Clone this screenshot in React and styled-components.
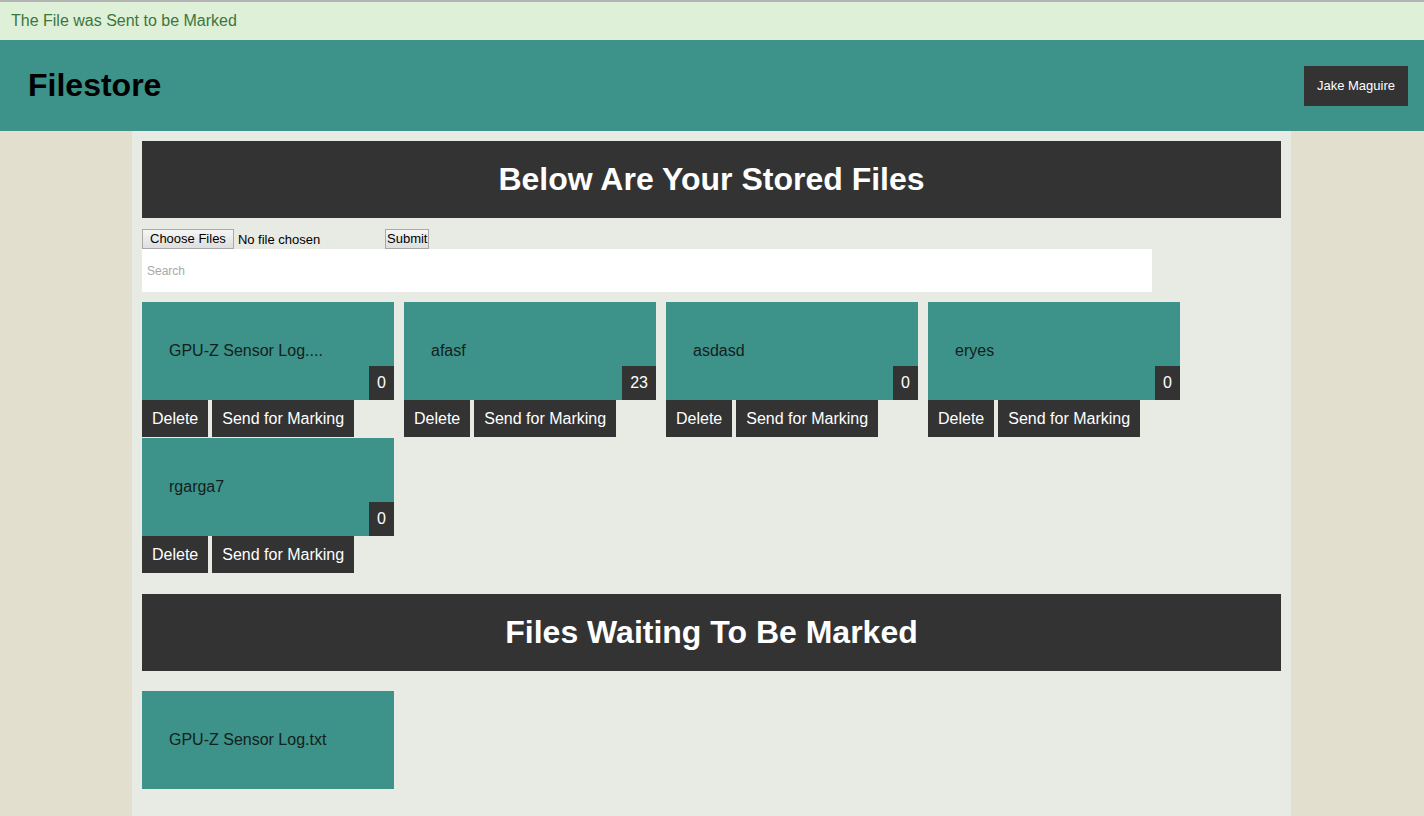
import React from "react";
import styled, { createGlobalStyle } from "styled-components";

const Global = createGlobalStyle`
  html, body { margin: 0; padding: 0; }
  body {
    background: #e2dfcf;
    font-family: "Liberation Sans", Arial, sans-serif;
    min-height: 816px;
  }
  * { box-sizing: border-box; }
`;

const Page = styled.div`
  display: flex;
  flex-direction: column;
  min-height: 816px;
`;

const Alert = styled.div`
  height: 40px;
  border-top: 2px solid #b4b4b4;
  background: #dff0d8;
  color: #3c763d;
  font-size: 16px;
  padding: 0 11px;
  display: flex;
  align-items: center;
`;

const Header = styled.header`
  height: 91px;
  background: #3d9389;
  display: flex;
  align-items: center;
  justify-content: space-between;
  padding: 0 16px 0 28px;
`;

const Brand = styled.h1`
  margin: 0;
  font-size: 32px;
  font-weight: bold;
  color: #000;
`;

const UserButton = styled.button`
  height: 40px;
  width: 104px;
  border: none;
  background: #333;
  color: #fff;
  font-family: "Liberation Sans", Arial, sans-serif;
  font-size: 13px;
  padding: 0;
`;

const Main = styled.main`
  flex: 1;
  width: 1159px;
  margin-left: 132px;
  background: #e8eae4;
  padding: 10px 10px 27px;
`;

const Banner = styled.h2`
  margin: 0;
  height: 77px;
  background: #333;
  color: #fff;
  font-size: 32px;
  font-weight: bold;
  display: flex;
  align-items: center;
  justify-content: center;
`;

const UploadRow = styled.form`
  margin-top: 10px;
  display: flex;
  align-items: center;
  height: 21px;
  font-family: "Liberation Sans", Arial, sans-serif;
  font-size: 13px;
`;

const FileInput = styled.input`
  width: 243px;
  font-family: "Liberation Sans", Arial, sans-serif;
  font-size: 13px;
  color: #000;
  &::file-selector-button {
    font-family: "Liberation Sans", Arial, sans-serif;
    font-size: 13px;
    height: 20px;
    padding: 0 7px;
    margin-right: 4px;
    border: 1px solid #a9a9a9;
    border-radius: 0;
    background: linear-gradient(#f6f6f6, #dedede);
    color: #000;
  }
`;

const SubmitButton = styled.button`
  font-family: "Liberation Sans", Arial, sans-serif;
  font-size: 13px;
  height: 20px;
  padding: 0 1px;
  border: 1px solid #a9a9a9;
  border-radius: 0;
  background: linear-gradient(#f6f6f6, #dedede);
  color: #000;
`;

const Search = styled.input`
  display: block;
  width: 1010px;
  height: 43px;
  border: none;
  outline: none;
  background: #fff;
  padding: 0 5px;
  font-family: "Liberation Sans", Arial, sans-serif;
  font-size: 12px;
  &::placeholder { color: #a8a8a8; }
`;

const CardGrid = styled.div`
  display: flex;
  flex-wrap: wrap;
  column-gap: 10px;
  row-gap: 1px;
  margin-top: ${(p) => p.$top}px;
`;

const Card = styled.div`
  width: 252px;
`;

const CardBody = styled.div`
  position: relative;
  height: 98px;
  background: #3d9389;
  color: #142020;
  font-size: 16px;
  display: flex;
  align-items: center;
  padding-left: 27px;
`;

const Badge = styled.span`
  position: absolute;
  right: 0;
  bottom: 0;
  height: 34px;
  padding: 0 8px;
  background: #333;
  color: #fff;
  font-size: 16px;
  display: flex;
  align-items: center;
`;

const Actions = styled.div`
  display: flex;
  gap: 4px;
`;

const ActionButton = styled.button`
  height: 37px;
  border: none;
  background: #333;
  color: #fff;
  font-family: "Liberation Sans", Arial, sans-serif;
  font-size: 16px;
  padding: 0 10px;
`;

const SectionGap = styled.div`
  height: 21px;
`;

const stored = [
  { name: "GPU-Z Sensor Log....", count: 0 },
  { name: "afasf", count: 23 },
  { name: "asdasd", count: 0 },
  { name: "eryes", count: 0 },
  { name: "rgarga7", count: 0 },
];

export default function App() {
  return (
    <Page>
      <Global />
      <Alert>The File was Sent to be Marked</Alert>
      <Header>
        <Brand>Filestore</Brand>
        <UserButton>Jake Maguire</UserButton>
      </Header>
      <Main>
        <Banner>Below Are Your Stored Files</Banner>
        <UploadRow onSubmit={(e) => e.preventDefault()}>
          <FileInput type="file" multiple />
          <SubmitButton type="submit">Submit</SubmitButton>
        </UploadRow>
        <Search placeholder="Search" />
        <CardGrid $top={10}>
          {stored.map((f) => (
            <Card key={f.name}>
              <CardBody>
                {f.name}
                <Badge>{f.count}</Badge>
              </CardBody>
              <Actions>
                <ActionButton>Delete</ActionButton>
                <ActionButton>Send for Marking</ActionButton>
              </Actions>
            </Card>
          ))}
        </CardGrid>
        <SectionGap />
        <Banner>Files Waiting To Be Marked</Banner>
        <CardGrid $top={20}>
          <Card>
            <CardBody>GPU-Z Sensor Log.txt</CardBody>
          </Card>
        </CardGrid>
      </Main>
    </Page>
  );
}
